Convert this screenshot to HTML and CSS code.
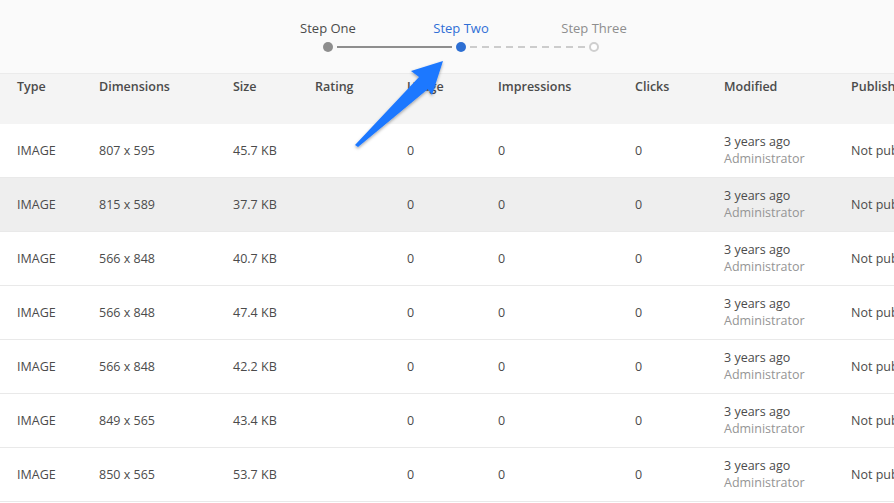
FILE: index.html
```html
<!DOCTYPE html>
<html>
<head>
<meta charset="utf-8">
<link rel="stylesheet" href="styles.css">
</head>
<body>
<div class="page">
  <div class="stepper">
    <div class="steps">
      <div class="step done"><span class="label">Step One</span><span class="dot"></span></div>
      <div class="line solid"></div>
      <div class="step current"><span class="label">Step Two</span><span class="dot"></span></div>
      <div class="line dashed"></div>
      <div class="step todo"><span class="label">Step Three</span><span class="dot"></span></div>
    </div>
  </div>
  <div class="table">
    <div class="row head">
      <div>Type</div><div>Dimensions</div><div>Size</div><div>Rating</div><div>Usage</div><div>Impressions</div><div>Clicks</div><div>Modified</div><div>Published</div>
    </div>
    <div class="row"><div>IMAGE</div><div>807 x 595</div><div>45.7 KB</div><div></div><div>0</div><div>0</div><div>0</div><div class="mod"><span>3 years ago</span><span class="who">Administrator</span></div><div>Not published</div></div>
    <div class="row hl"><div>IMAGE</div><div>815 x 589</div><div>37.7 KB</div><div></div><div>0</div><div>0</div><div>0</div><div class="mod"><span>3 years ago</span><span class="who">Administrator</span></div><div>Not published</div></div>
    <div class="row"><div>IMAGE</div><div>566 x 848</div><div>40.7 KB</div><div></div><div>0</div><div>0</div><div>0</div><div class="mod"><span>3 years ago</span><span class="who">Administrator</span></div><div>Not published</div></div>
    <div class="row"><div>IMAGE</div><div>566 x 848</div><div>47.4 KB</div><div></div><div>0</div><div>0</div><div>0</div><div class="mod"><span>3 years ago</span><span class="who">Administrator</span></div><div>Not published</div></div>
    <div class="row"><div>IMAGE</div><div>566 x 848</div><div>42.2 KB</div><div></div><div>0</div><div>0</div><div>0</div><div class="mod"><span>3 years ago</span><span class="who">Administrator</span></div><div>Not published</div></div>
    <div class="row"><div>IMAGE</div><div>849 x 565</div><div>43.4 KB</div><div></div><div>0</div><div>0</div><div>0</div><div class="mod"><span>3 years ago</span><span class="who">Administrator</span></div><div>Not published</div></div>
    <div class="row"><div>IMAGE</div><div>850 x 565</div><div>53.7 KB</div><div></div><div>0</div><div>0</div><div>0</div><div class="mod"><span>3 years ago</span><span class="who">Administrator</span></div><div>Not published</div></div>
  </div>
  <svg class="arrow" width="894" height="503" viewBox="0 0 894 503">
    <defs>
      <filter id="sh" x="-20%" y="-20%" width="140%" height="140%">
        <feDropShadow dx="0" dy="1.5" stdDeviation="1.5" flood-color="#000" flood-opacity="0.35"/>
      </filter>
    </defs>
    <polygon filter="url(#sh)" fill="#1f78ff" points="443,61 411,71 419,77 355,145 358,147 428,89 432,95"/>
  </svg>
</div>
</body>
</html>
```
FILE: styles.css
```css
* { box-sizing: border-box; }
html, body { margin: 0; padding: 0; }
body {
  font-family: "Open Sans", "Liberation Sans", sans-serif;
  font-size: 12.5px;
  color: #4b4b4b;
  background: #fff;
  width: 894px;
  height: 503px;
  overflow: hidden;
}
.page { position: relative; width: 894px; height: 503px; overflow: hidden; }
.stepper {
  height: 74px;
  background: #fafafa;
  border-bottom: 1px solid #ebebeb;
  display: flex;
  justify-content: center;
}
.steps {
  display: flex;
  align-items: flex-end;
  padding-bottom: 21px;
  margin-left: 28px;
}
.step {
  position: relative;
  width: 10px;
  height: 10px;
  display: flex;
  justify-content: center;
}
.step .label {
  position: absolute;
  bottom: 15px;
  white-space: nowrap;
  font-size: 13px;
}
.step .dot {
  width: 10px; height: 10px; border-radius: 50%;
  display: block;
}
.done .label { color: #4b4b4b; }
.done .dot { background: #8e8e8e; }
.current .label { color: #2f6fd6; }
.current .dot { background: #2d6fd3; }
.todo .label { color: #8e8e8e; }
.todo .dot { border: 2px solid #cfcfcf; background: #fff; }
.line { width: 115px; height: 2px; margin: 0 4px 4px; }
.line.solid { background: #8e8e8e; }
.line.dashed {
  background: repeating-linear-gradient(90deg, #cccccc 0 7px, transparent 7px 12px);
}
.table { display: flex; flex-direction: column; overflow: hidden; }
.row {
  display: grid;
  grid-template-columns: 82px 134px 82px 92px 91px 137px 89px 127px 120px;
  padding-left: 17px;
  height: 54px;
  align-items: center;
  border-bottom: 1px solid #e9e9e9;
  white-space: nowrap;
}
.row.head {
  height: 50px;
  background: #f4f4f4;
  align-items: start;
  padding-top: 4px;
  font-weight: 600;
  border-bottom: none;
  color: #4b4b4b;
}
.row.hl { background: #eeeeee; }
.mod { display: flex; flex-direction: column; line-height: 17px; margin-top: -1px; }
.who { color: #959595; }
.arrow { position: absolute; left: 0; top: 0; pointer-events: none; }
```
